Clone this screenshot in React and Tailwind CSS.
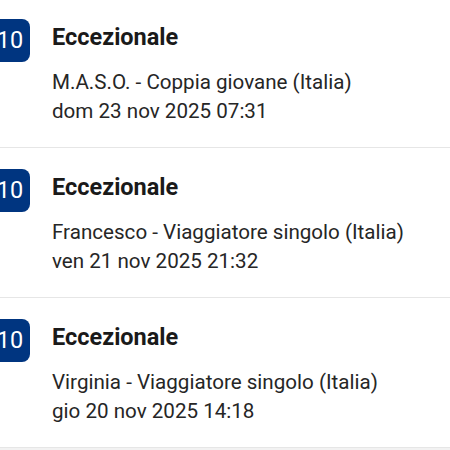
const reviews = [
  { score: '10', label: 'Eccezionale', author: 'M.A.S.O. - Coppia giovane (Italia)', date: 'dom 23 nov 2025 07:31' },
  { score: '10', label: 'Eccezionale', author: 'Francesco - Viaggiatore singolo (Italia)', date: 'ven 21 nov 2025 21:32' },
  { score: '10', label: 'Eccezionale', author: 'Virginia - Viaggiatore singolo (Italia)', date: 'gio 20 nov 2025 14:18' },
]

export default function App() {
  return (
    <div className="h-[450px] w-[450px] overflow-hidden bg-[#f2f2f2] font-['Roboto',sans-serif]">
      <div className="-mt-[2px] bg-white">
        {reviews.map((r, i) => (
          <div key={i} className="flex h-[150px] items-start gap-[22px] border-b border-[#e6e6e6]">
            <div className="-ml-[10px] mt-[21px] flex h-[43px] w-[40px] shrink-0 items-center justify-center rounded-[8px] bg-[#003580] text-[23.5px] leading-none text-white">
              {r.score}
            </div>
            <div className="pt-[25px] text-[#1a1a1a]">
              <div className="text-[23.5px] font-bold leading-[28px]">{r.label}</div>
              <div className="mt-[16.5px] text-[20.6px] leading-[29px] text-[#262626]">
                <div>{r.author}</div>
                <div>{r.date}</div>
              </div>
            </div>
          </div>
        ))}
      </div>
    </div>
  )
}
